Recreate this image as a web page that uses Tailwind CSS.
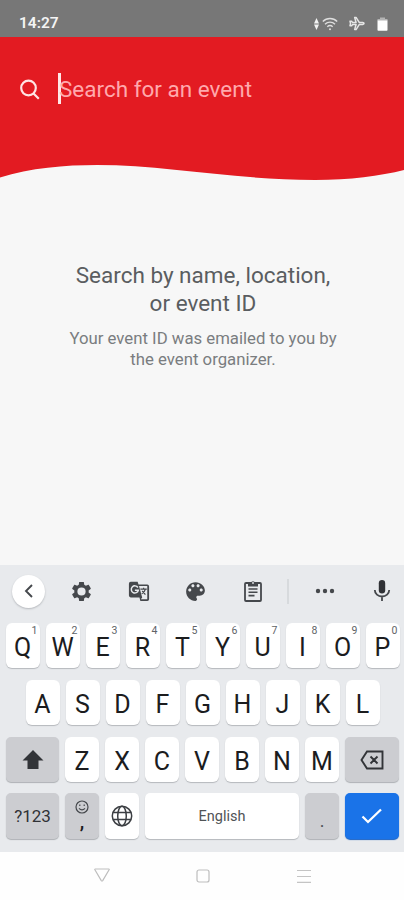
<!DOCTYPE html>
<html lang="en">
<head>
    <meta charset="UTF-8">
    <meta name="viewport" content="width=device-width, initial-scale=1.0">
    <title>Search for an event</title>
    <script src="https://cdn.jsdelivr.net/npm/@tailwindcss/browser@4"></script>
</head>
<body class="bg-[#f7f7f7] font-['Roboto',sans-serif]">
    <div class="w-[404px] h-[900px] flex flex-col overflow-hidden">
        <!-- Status bar -->
        <div class="h-[37px] shrink-0 bg-[#777777] flex items-center pl-[19px] pr-[16px] pt-[10px] text-white">
            <span class="text-[15.500px] leading-none font-semibold text-[#f4f4f4]">14:27</span>
            <div class="ml-auto flex items-center">
                <svg class="w-[5px] h-[12px]" viewBox="0 0 5 12" fill="#f2f2f2"><path d="M2.500 0L5 5.500H0zM2.500 12L0 6.500h5z"/></svg>
                <svg class="w-[16px] h-[14px] ml-[3px]" viewBox="0 0 16 14" fill="none" stroke="#dedede" stroke-width="1.400"><path d="M.8 4.500c4-4 10.400-4 14.400 0M3 7.200c2.800-2.800 7.200-2.800 10 0M5.300 9.800c1.600-1.500 3.800-1.500 5.400 0"/><circle cx="8" cy="12.300" r="1" fill="#dedede" stroke="none"/></svg>
                <svg class="w-[16px] h-[15px] ml-[11px]" viewBox="0 0 17 16" fill="none" stroke="#e6e6e6" stroke-width="1.600" stroke-linejoin="round"><path d="M1 5.500h1.800l1 1.500h3.700L6 1.500h1.500L11 7h3.500q1.500.3 1.500 1t-1.500 1H11l-3.500 5.500H6L7.500 9H3.800l-1 1.500H1l.6-2.500z"/></svg>
                <svg class="w-[11px] h-[14px] ml-[12px]" viewBox="0 0 11 14"><path fill="#b4b4b4" d="M3 .5h5v1.500h2.500v2H.5V2H3z"/><path fill="#fff" d="M.5 3.500h10V13q0 .8-.8.8H1.300q-.8 0-.8-.8z"/></svg>
            </div>
        </div>

        <!-- Search header -->
        <div class="h-[105px] shrink-0 bg-[#e31b22] flex items-center pl-[19px]">
            <svg class="w-[22px] h-[22px]" viewBox="0 0 22 22" fill="none" stroke="#ffe4e4" stroke-width="2.200"><circle cx="9.500" cy="9" r="7.300"/><path d="M14.500 14.500l5.300 5.300"/></svg>
            <span class="w-[3px] h-[31px] ml-[17px] -mt-[2px] bg-[#ffe8e8]"></span>
            <span class="-ml-[2px] text-[22.500px] text-[#ffa9ad]">Search for an event</span>
        </div>
        <svg class="w-[404px] h-[42px] shrink-0 -mt-px" viewBox="0 141 404 42"><path fill="#e31b22" d="M0 141V177.500C30 168 65 165 97 165C165 165 235 180 315 180C350 180 380 176 404 170V141z"/></svg>

        <!-- Hint -->
        <div class="flex-1 pt-[78px] pl-[2px] text-center">
            <h1 class="text-[22.500px] leading-[28px] text-[#5a5d60]">Search by name, location,<br>or event ID</h1>
            <p class="mt-[11px] text-[16.750px] leading-[21px] text-[#7a7d80]">Your event ID was emailed to you by<br>the event organizer.</p>
        </div>

        <!-- Keyboard -->
        <div class="h-[287px] shrink-0 bg-[#e8eaed] text-[#1b1c1e]">
            <div class="h-[52px] flex items-center pl-[12px] text-[#45484c]">
                <div class="w-[33px] h-[33px] rounded-full bg-white shadow-[0_1px_2px_#b5b8bc] flex items-center justify-center">
                    <svg class="w-[12px] h-[16px]" viewBox="0 0 12 16" fill="none" stroke="currentColor" stroke-width="1.900"><path d="M9 2L3 8l6 6"/></svg>
                </div>
                <svg class="w-[23px] h-[23px] ml-[25px]" viewBox="0 0 24 24" fill="currentColor"><path d="M19.430 12.980c.04-.32.070-.64.070-.98s-.03-.66-.07-.98l2.110-1.650c.19-.15.240-.42.120-.64l-2-3.460c-.12-.22-.39-.3-.61-.22l-2.490 1c-.52-.4-1.080-.73-1.690-.98l-.38-2.650C14.460 2.180 14.250 2 14 2h-4c-.25 0-.46.180-.49.420l-.38 2.650c-.61.250-1.170.590-1.690.980l-2.490-1c-.23-.09-.49 0-.61.220l-2 3.460c-.13.220-.07.490.120.640l2.110 1.650c-.04.320-.07.650-.07.980s.03.660.070.980l-2.110 1.650c-.19.150-.24.420-.12.640l2 3.460c.12.220.39.300.61.220l2.490-1c.52.400 1.080.730 1.690.980l.38 2.650c.03.240.24.420.49.420h4c.25 0 .46-.18.490-.42l.38-2.650c.61-.25 1.170-.59 1.690-.98l2.490 1c.23.090.49 0 .61-.22l2-3.460c.12-.22.070-.49-.12-.64zM12 16.300a4.300 4.300 0 1 1 0-8.600a4.300 4.300 0 0 1 0 8.600z"/></svg>
                <svg class="w-[22px] h-[22px] ml-[35px]" viewBox="0 0 24 24"><path fill="currentColor" fill-rule="evenodd" d="M3 2h7.500l1 3H21q2 0 2 2v14q0 2-2 2h-7.500l-1-4H3q-2 0-2-2V4q0-2 2-2zM12 6.500L15.500 19l-1.500 2h7V6.500z"/><path d="M10.800 8.200a3.900 3.900 0 1 0 .5 3H7.500" fill="none" stroke="#e8eaed" stroke-width="1.600"/><path d="M13.500 10h7M17 8.500V10M19 10q-.6 3-4 5M15.500 12l3.500 4" fill="none" stroke="currentColor" stroke-width="1.300"/></svg>
                <svg class="w-[25px] h-[25px] ml-[33px]" viewBox="0 0 24 24" fill="currentColor"><path d="M12 3c-4.970 0-9 4.030-9 9s4.030 9 9 9c.83 0 1.500-.67 1.500-1.500 0-.39-.15-.74-.39-1.010-.23-.26-.38-.61-.38-.99 0-.83.670-1.500 1.500-1.500H16c2.760 0 5-2.240 5-5 0-4.420-4.030-8-9-8zm-5.500 9c-.83 0-1.500-.67-1.500-1.500S5.670 9 6.500 9 8 9.670 8 10.500 7.330 12 6.500 12zm3-4C8.670 8 8 7.330 8 6.500S8.670 5 9.500 5s1.500.670 1.500 1.500S10.330 8 9.500 8zm5 0c-.83 0-1.500-.67-1.500-1.500S13.670 5 14.500 5s1.500.670 1.500 1.500S15.330 8 14.500 8zm3 4c-.83 0-1.500-.67-1.500-1.500S16.670 9 17.500 9s1.500.670 1.500 1.500-.67 1.500-1.500 1.500z"/></svg>
                <svg class="w-[20px] h-[22px] ml-[35px]" viewBox="0 0 20 22" fill="none" stroke="currentColor" stroke-width="1.800"><rect x="2" y="3" width="16" height="18" rx="1"/><path d="M5.500 9h9M5.500 12.300h9M5.500 15.600h6" stroke-width="1.600"/><path fill="currentColor" stroke="none" d="M5 3h2.800a2.300 2.300 0 0 1 4.400 0H15v3.500H5z"/><circle cx="10" cy="3" r=".9" fill="#e8eaed" stroke="none"/></svg>
                <div class="w-[2px] h-[25px] ml-[24px] bg-[#d7dadd]"></div>
                <svg class="w-[20px] h-[6px] ml-[26px]" viewBox="0 0 20 6" fill="currentColor"><circle cx="3" cy="3" r="2.200"/><circle cx="10" cy="3" r="2.200"/><circle cx="17" cy="3" r="2.200"/></svg>
                <svg class="w-[18px] h-[22px] ml-[38px]" viewBox="0 0 18 22"><rect x="5.800" y="0" width="6.400" height="13.500" rx="3.200" fill="#303236"/><path d="M1.800 10a7.200 6.500 0 0 0 14.400 0M9 16.500V21" fill="none" stroke="currentColor" stroke-width="1.800"/></svg>
            </div>

            <div id="row1" class="flex gap-[6px] pl-[5.500px] pt-[6px]"></div>
            <div id="row2" class="flex gap-[6px] pl-[25.500px] pt-[12px]"></div>
            <div class="flex gap-[6px] pl-[6px] pt-[12px]">
                <div class="w-[53px] h-[45px] rounded-[5px] bg-[#cccdd1] shadow-[0_1px_1px_#aeb1b5] flex items-center justify-center">
                    <svg class="w-[22px] h-[20px]" viewBox="0 0 22 20" fill="#323438"><path d="M11 0l10.500 10.500H16.500V19h-11v-8.500H.5z"/></svg>
                </div>
                <div id="row3" class="flex gap-[6px]"></div>
                <div class="w-[54px] h-[45px] rounded-[5px] bg-[#cccdd1] shadow-[0_1px_1px_#aeb1b5] flex items-center justify-center">
                    <svg class="w-[24px] h-[20px]" viewBox="0 0 24 20" fill="none" stroke="#323438" stroke-width="1.900"><path d="M7 1.500h15.500v17H7L1.500 10zM10.500 6.500l7 7M17.500 6.500l-7 7"/></svg>
                </div>
            </div>
            <div class="flex gap-[6px] pl-[6px] pt-[11px] *:h-[46px] *:rounded-[5px]">
                <div class="w-[53px] bg-[#cccdd1] shadow-[0_1px_1px_#aeb1b5] flex items-center justify-center text-[17px] text-[#303236] pt-[2px]">?123</div>
                <div class="w-[34px] bg-[#cccdd1] shadow-[0_1px_1px_#aeb1b5] flex flex-col items-center pt-[7px]">
                    <svg class="w-[14px] h-[14px]" viewBox="0 0 14 14" fill="none" stroke="#45484c" stroke-width="1.200"><circle cx="7" cy="7" r="6"/><path d="M4 8.300q3 3.200 6 0M4.800 4.500v1.500M9.200 4.500v1.500"/></svg>
                    <span class="text-[20px] leading-[14px] font-medium">,</span>
                </div>
                <div class="w-[34px] bg-white shadow-[0_1px_1px_#b5b8bc] flex items-center justify-center">
                    <svg class="w-[22px] h-[22px]" viewBox="0 0 22 22" fill="none" stroke="#3c3f43" stroke-width="1.500"><circle cx="11" cy="11" r="9.700"/><ellipse cx="11" cy="11" rx="4.300" ry="9.700"/><path d="M2 7.500h18M2 14.500h18"/></svg>
                </div>
                <div class="w-[154px] bg-white shadow-[0_1px_1px_#b5b8bc] flex items-center justify-center text-[14.500px] text-[#505356] pt-[2px]">English</div>
                <div class="w-[34px] bg-[#cccdd1] shadow-[0_1px_1px_#aeb1b5] flex items-center justify-center pt-[8px] text-[18px] text-[#505356]">.</div>
                <div class="w-[54px] bg-[#1a73e8] shadow-[0_1px_1px_#1760c4] flex items-center justify-center">
                    <svg class="w-[22px] h-[16px]" viewBox="0 0 22 16" fill="none" stroke="#fff" stroke-width="2.300"><path d="M1.500 8.500l5.500 5.500L20 1.500"/></svg>
                </div>
            </div>
        </div>

        <!-- Navigation bar -->
        <div class="h-[48px] shrink-0 bg-[#fefefe] flex items-center pl-[93px]">
            <svg class="w-[18px] h-[14px] -mt-[2px]" viewBox="0 0 18 14" fill="none" stroke="#bdbdbd" stroke-width="1.200" stroke-linejoin="round"><path d="M2.300 1h13.400q.8 0 .4.800L9.700 12.600q-.7.800-1.400 0L1.900 1.800Q1.500 1 2.300 1z"/></svg>
            <svg class="w-[14px] h-[14px] ml-[85px]" viewBox="0 0 14 14" fill="none" stroke="#bdbdbd" stroke-width="1.200"><rect x="1" y="1" width="12" height="12" rx="2"/></svg>
            <svg class="w-[14px] h-[14px] ml-[87px]" viewBox="0 0 14 14" stroke="#c4c4c4" stroke-width="1.200"><path d="M0 1.500h14M0 7.500h14M0 13.300h14"/></svg>
        </div>
    </div>

    <script>
        // Fill a row with letter keys, with optional number hints in the corner
        function addKeys(id, letters, hints) {
            const row = document.getElementById(id);
            letters.split('').forEach((letter, i) => {
                const key = document.createElement('div');
                key.className = 'relative w-[34px] h-[45px] rounded-[6px] bg-white shadow-[0_1px_1px_#b5b8bc] flex items-center justify-center text-[25px] leading-none pt-[3px]';
                key.textContent = letter;
                if (hints) {
                    const hint = document.createElement('span');
                    hint.className = 'absolute top-[3px] right-[2px] text-[10.5px] leading-none text-[#606367]';
                    hint.textContent = hints[i];
                    key.appendChild(hint);
                }
                row.appendChild(key);
            });
        }

        addKeys('row1', 'QWERTYUIOP', '1234567890');
        addKeys('row2', 'ASDFGHJKL');
        addKeys('row3', 'ZXCVBNM');
    </script>
</body>
</html>
